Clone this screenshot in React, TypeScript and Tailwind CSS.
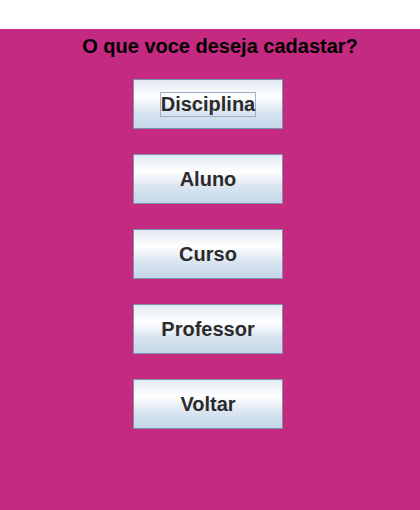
const options = ["Disciplina", "Aluno", "Curso", "Professor", "Voltar"];

export default function App() {
  return (
    <div className="w-[420px] h-[510px] flex flex-col bg-white font-['Liberation_Sans',Arial,sans-serif]">
      <div className="h-[29px] bg-white" />
      <div className="flex-1 bg-[#c42a7f] flex flex-col items-center">
        <h1 className="mt-[6px] pl-[20px] text-[20px] leading-[23px] font-bold text-black">
          O que voce deseja cadastar?
        </h1>
        <div className="mt-[21px] flex flex-col gap-[25px] pr-[4px]">
          {options.map((label, i) => (
            <button
              key={label}
              className="w-[150px] h-[50px] border border-[#7b93a8] bg-[linear-gradient(to_bottom,#e2eaf3_0%,#ffffff_35%,#dbe6f1_65%,#c3d6e9_100%)] flex items-center justify-center"
            >
              <span
                className={
                  i === 0
                    ? "border border-[#9fb3c7] h-[25px] flex items-center text-[20px] font-bold text-[#2b2b2b]"
                    : "text-[20px] font-bold text-[#2b2b2b]"
                }
              >
                {label}
              </span>
            </button>
          ))}
        </div>
      </div>
    </div>
  );
}
